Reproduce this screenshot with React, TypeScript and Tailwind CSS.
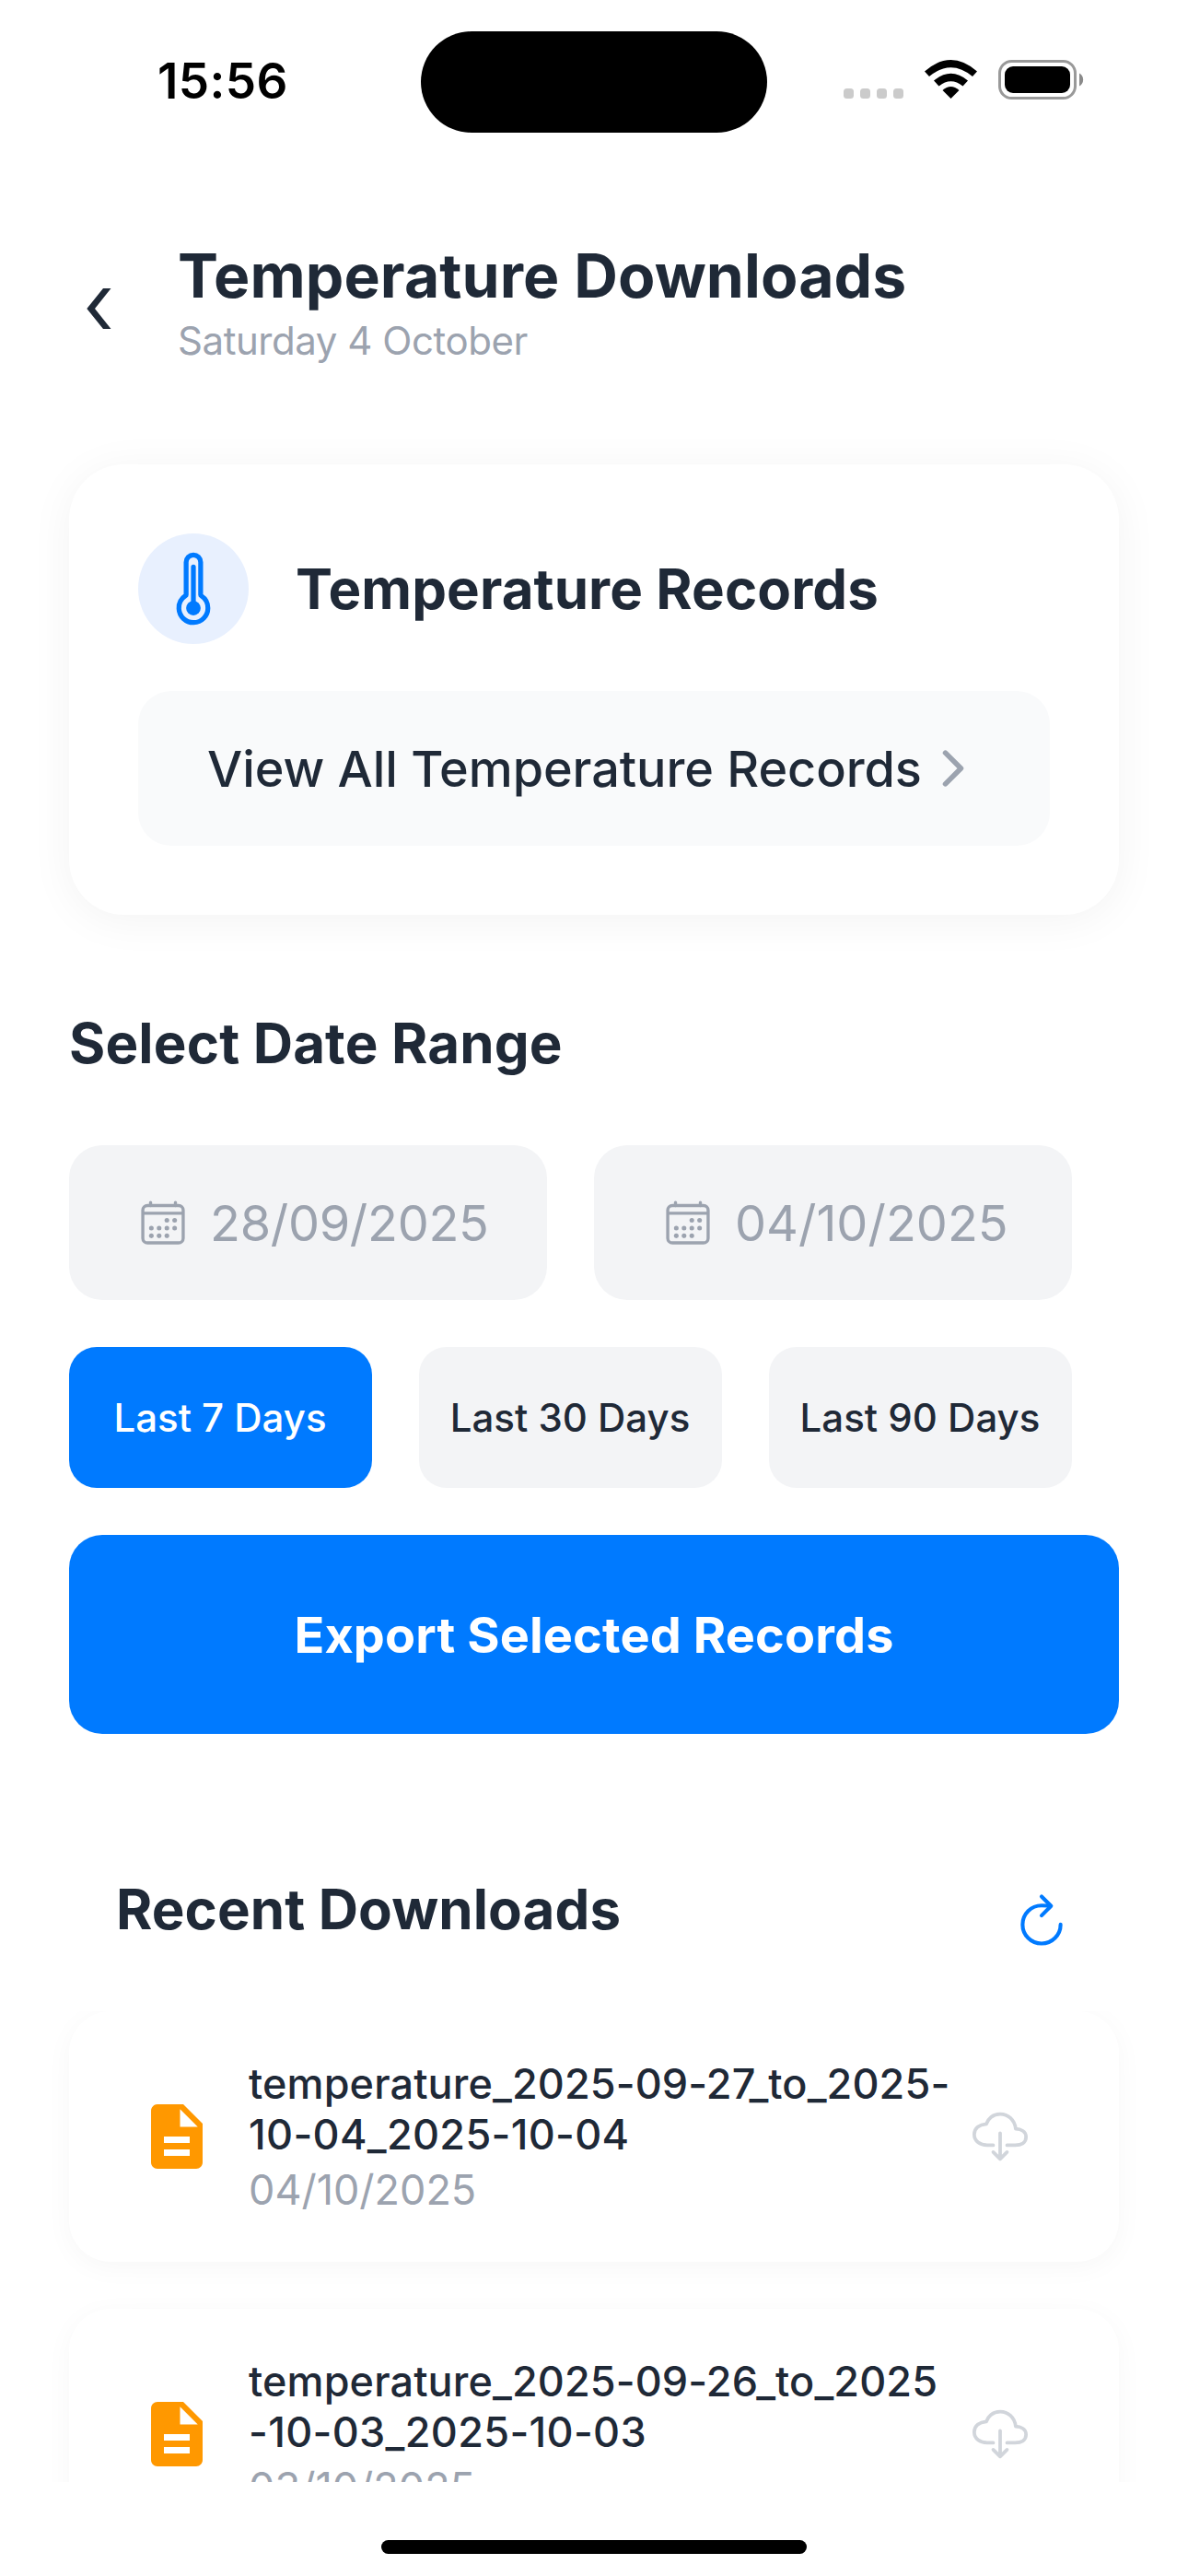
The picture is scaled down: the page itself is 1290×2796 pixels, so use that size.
import {
  IoCalendarOutline,
  IoChevronForward,
  IoCloudDownloadOutline,
  IoRefreshOutline,
  IoThermometerOutline,
} from "react-icons/io5";
import { MdDescription } from "react-icons/md";

const dates = [
  { value: "28/09/2025", tracking: "tracking-[-0.3px]" },
  { value: "04/10/2025", tracking: "tracking-normal" },
];

const ranges = [
  { label: "Last 7 Days", active: true },
  { label: "Last 30 Days", active: false },
  { label: "Last 90 Days", active: false },
];

const downloads = [
  { lines: ["temperature_2025-09-27_to_2025-", "10-04_2025-10-04"], date: "04/10/2025" },
  { lines: ["temperature_2025-09-26_to_2025", "-10-03_2025-10-03"], date: "03/10/2025" },
];

function StatusBar() {
  return (
    <div className="flex h-[177px] items-start pt-[33px]">
      <div className="flex h-[110px] w-[457px] items-center pl-[171px] text-[53px] font-semibold leading-none tracking-[0.4px] text-black">
        15:56
      </div>
      <div className="mt-px h-[110px] w-[376px] rounded-full bg-black" />
      <svg className="ml-[47px] mt-[7px] h-[100px] w-[340px]" viewBox="0 0 340 100" fill="none">
        {[36, 54, 72, 90].map((x) => (
          <rect key={x} x={x} y="56" width="11" height="11" rx="3.5" fill="#cbcbcb" />
        ))}
        <path d="M124 37.5 Q152.500 12.500 181 37.500 L176 43 Q152.500 23.500 129 43 Z" fill="#000" />
        <path d="M134 47.500 Q152.500 32 171 47.500 L165.500 53.500 Q152.500 43 139.500 53.500 Z" fill="#000" />
        <path d="M143.500 58 Q152.500 50 161.500 58 L152.500 67 Z" fill="#000" />
        <rect x="205.500" y="26.500" width="82" height="40" rx="13" stroke="#999" strokeWidth="3" />
        <rect x="211" y="32" width="71" height="29" rx="9" fill="#000" />
        <path d="M292 39.500 a8 8 0 0 1 0 14 Z" fill="#8a8a8a" />
      </svg>
    </div>
  );
}

function DownloadCard({ lines, date }: { lines: string[]; date: string }) {
  return (
    <div className="flex h-[272px] shrink-0 items-center rounded-[45px] bg-white pl-[75px] shadow-[0_6px_30px_rgba(0,0,0,0.035)]">
      <MdDescription className="size-[84px] text-[#ff9800]" />
      <div className="ml-[36px] w-[780px] whitespace-nowrap text-[45px] leading-[55px]">
        <div className="font-medium text-[#1f2937]">
          <div className="tracking-[0.12px]">{lines[0]}</div>
          <div className="tracking-[0.33px]">{lines[1]}</div>
        </div>
        <div className="mt-[5px] text-[#9ca3af]">{date}</div>
      </div>
      <IoCloudDownloadOutline className="ml-[6px] size-[60px] text-[#d1d5db]" />
    </div>
  );
}

export default function App() {
  return (
    <div className="flex h-[2796px] w-[1290px] flex-col overflow-hidden bg-white font-['Inter',sans-serif] text-[#1f2937]">
      <StatusBar />

      <header className="flex h-[327px] pl-[94px] pt-[82px]">
        <svg className="mt-[54px] h-[44px] w-[27px]" viewBox="0 0 27 44" fill="#1f2937">
          <path d="M18 0 H26.500 L9 22 L26.500 44 H18 L0.300 22 Z" />
        </svg>
        <div className="ml-[72px]">
          <h1 className="text-[66px] font-bold leading-[80px] tracking-[0.09px]">Temperature Downloads</h1>
          <p className="mt-[5px] text-[42px] leading-[52px] tracking-[-0.45px] text-[#9ca3af]">Saturday 4 October</p>
        </div>
      </header>

      <main className="flex flex-col px-[75px]">
        <section className="h-[489px] rounded-[60px] bg-white p-[75px] shadow-[0_6px_48px_rgba(0,0,0,0.05)]">
          <div className="flex items-center">
            <div className="flex size-[120px] items-center justify-center rounded-full bg-[#e8f0fe]">
              <IoThermometerOutline className="size-[84px] text-[#007aff]" />
            </div>
            <h2 className="ml-[51px] text-[60px] font-bold leading-[72px] tracking-[0.1px]">Temperature Records</h2>
          </div>
          <button className="mt-[51px] flex h-[168px] w-full items-center justify-between rounded-[36px] bg-[#f9fafb] px-[75px] text-[54px] font-medium">
            <span className="whitespace-nowrap tracking-[-0.07px]">View All Temperature Records</span>
            <IoChevronForward className="size-[60px] shrink-0 text-[#9ca3af]" />
          </button>
        </section>

        <h2 className="mt-[103px] text-[60px] font-bold leading-[72px] tracking-[0.16px]">Select Date Range</h2>

        <div className="mt-[75px] flex gap-[51px]">
          {dates.map(({ value, tracking }) => (
            <div
              key={value}
              className="flex h-[168px] w-[519px] items-center gap-[24px] rounded-[36px] bg-[#f3f4f6] pl-[75px] text-[54px] text-[#9ca3af]"
            >
              <IoCalendarOutline className="size-[54px]" />
              <span className={tracking}>{value}</span>
            </div>
          ))}
        </div>

        <div className="mt-[51px] flex gap-[51px]">
          {ranges.map(({ label, active }) => (
            <button
              key={label}
              className={
                "h-[153px] w-[329px] whitespace-nowrap rounded-[30px] pr-px text-[42px] font-medium " +
                (active ? "bg-[#007aff] text-white" : "bg-[#f3f4f6]")
              }
            >
              {label}
            </button>
          ))}
        </div>

        <button className="mt-[51px] h-[216px] rounded-[36px] bg-[#007aff] text-[54px] font-bold tracking-[0.13px] text-white">
          Export Selected Records
        </button>

        <div className="mt-[154px] flex h-[147px] justify-between px-[51px]">
          <h2 className="text-[60px] font-bold leading-[72px] tracking-[0.1px]">Recent Downloads</h2>
          <IoRefreshOutline className="mt-[15px] size-[66px] text-[#007aff]" />
        </div>
      </main>

      <div className="flex h-[511px] flex-col gap-[51px] overflow-hidden px-[75px]">
        {downloads.map((item) => (
          <DownloadCard key={item.date} {...item} />
        ))}
      </div>

      <div className="mt-[63px] h-[15px] w-[462px] self-center rounded-full bg-black" />
    </div>
  );
}
